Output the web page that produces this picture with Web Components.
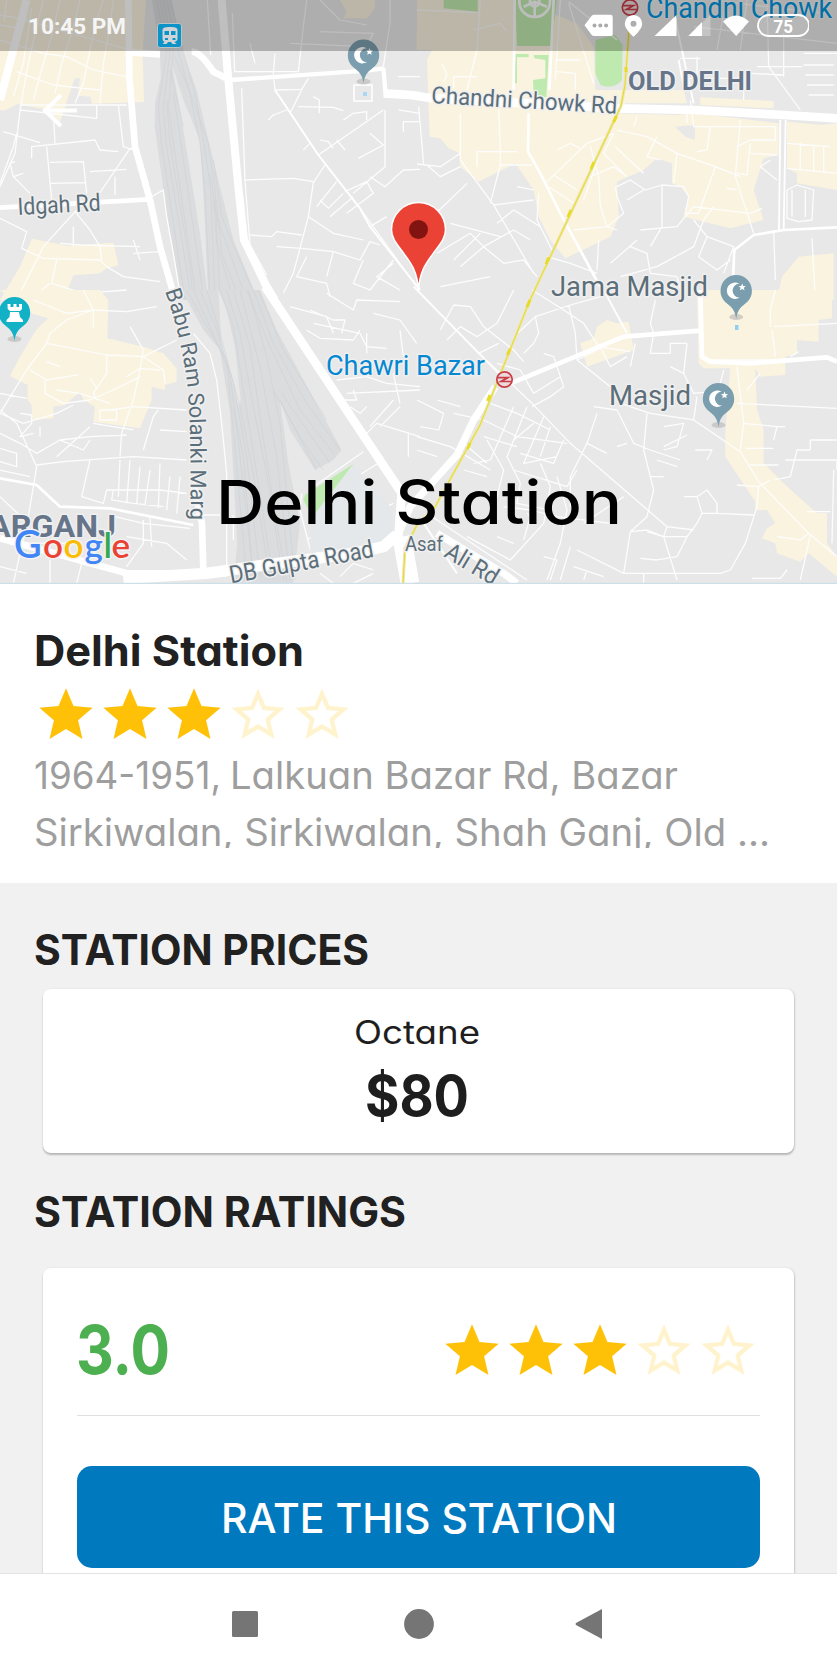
<!DOCTYPE html>
<html lang="en">
<head>
<meta charset="utf-8">
<title>Delhi Station</title>
<style>
html,body{margin:0;height:100%;overflow:hidden;background:#fff}
body{font-family:Inter,"Open Sans",sans-serif;color:#212121}
</style>
</head>
<body>
<station-screen></station-screen>
<script>
const define=(name,html)=>{
  const t=document.createElement('template');t.innerHTML=html;
  customElements.define(name,class extends HTMLElement{
    constructor(){super();this.attachShadow({mode:'open'}).append(t.content.cloneNode(true));}
  });
};

/* One line of text fitted to a given advance width. */
customElements.define('fit-text',class extends HTMLElement{
  connectedCallback(){
    const a=n=>this.getAttribute(n);
    const root=this.attachShadow({mode:'open'});
    root.innerHTML=`<style>:host{display:block;flex:none;width:${a('w')}px;height:${a('h')}px}
      svg{display:block;overflow:${this.hasAttribute('clip')?'hidden':'visible'};width:100%;height:100%}
      text{fill:currentColor;font-feature-settings:"cv11";font-weight:${a('weight')||400};font-size:${a('size')}px}</style>
      <svg><text x="${a('dx')||0}" y="${a('base')}" textLength="${+a('w')-2*(+a('dx')||0)}" lengthAdjust="spacingAndGlyphs"></text></svg>`;
    root.querySelector('text').textContent=this.textContent.trim();
  }
});

customElements.define('star-rating',class extends HTMLElement{
  connectedCallback(){
    const v=+this.getAttribute('value');
    const full='<path d="M12 17.27 18.18 21l-1.64-7.03L22 9.24l-7.19-.61L12 2 9.19 8.63 2 9.24l5.46 4.73L5.82 21z"/>';
    const empty='<path opacity=".2" d="M22 9.24l-7.19-.62L12 2 9.19 8.63 2 9.24l5.46 4.73L5.82 21 12 17.27 18.18 21l-1.63-7.03L22 9.24zM12 15.4l-3.76 2.27 1-4.28-3.32-2.88 4.38-.38L12 6.1l1.71 4.04 4.38.38-3.32 2.88 1 4.28L12 15.4z"/>';
    this.attachShadow({mode:'open'}).innerHTML='<style>:host{display:flex;flex:none}svg{width:64px;height:64px;fill:#ffc107}</style>'+
      [1,2,3,4,5].map(i=>`<svg viewBox="0 0 24 24">${i<=v?full:empty}</svg>`).join('');
  }
});

define('status-bar',`<style>
:host{display:flex;box-sizing:border-box;height:51px;padding:0 28px;justify-content:space-between;background:rgba(0,0,0,.25);color:#f5f5f5}
svg{display:block}
</style>
<svg width="105" height="51"><text x="0" y="34" font-family="Roboto" font-weight="700" font-size="22" textLength="98" lengthAdjust="spacingAndGlyphs" fill="currentColor">10:45 PM</text></svg>
<svg width="227" height="51" viewBox="582 0 227 51" fill="#fff">
 <path d="M584.5 25.3 591.5 16q1-1.3 3-1.3h16q2.2 0 2.2 2.2v17q0 2.2-2.2 2.2h-16q-2 0-3-1.4z"/>
 <g fill="#aaa"><circle cx="594.5" cy="25.6" r="2"/><circle cx="600.3" cy="25.6" r="2"/><circle cx="606.1" cy="25.6" r="2"/></g>
 <path fill-rule="evenodd" d="M633.5 15a8.7 8.7 0 0 0-8.7 8.8c0 5.7 8.7 13 8.7 13s8.7-7.3 8.7-13a8.7 8.7 0 0 0-8.7-8.8zm0 5.8a3 3 0 1 1 0 6 3 3 0 0 1 0-6z"/>
 <path d="M654.5 36 676.5 15V36z"/>
 <path opacity=".28" d="M688 36 710.5 15V36z"/><path d="M688.5 36 702 22V36z"/>
 <path d="M723 21.5Q736 9.5 749 21.5L736.2 36z"/>
 <rect x="758" y="15" width="51" height="21" rx="10.5" fill="#fff" fill-opacity=".12" stroke="#fff" stroke-width="1.8"/>
 <text x="773.5" y="32.500" font-family="Roboto" font-weight="700" font-size="19" textLength="19.5" lengthAdjust="spacingAndGlyphs">75</text>
</svg>`);

define('station-map',`<style>
:host{display:block;height:584px;overflow:hidden}
svg{display:block}
.y{fill:#faf3df}.g{fill:#bfeaaf}
.t{fill:none;stroke:#fdfdfd;stroke-width:3.8;stroke-linejoin:round}
.m{fill:none;stroke:#fff;stroke-width:8;stroke-linejoin:round}
.b{fill:none;stroke:#fff;stroke-width:20;stroke-linejoin:round}
.r{fill:none;stroke:#cfd2d5;stroke-width:3;opacity:.65}
.l{font-family:Roboto,sans-serif;fill:#5b6e79;paint-order:stroke;stroke:#f0f0f0;stroke-width:3px;stroke-linejoin:round}
</style>
<svg width="837" height="584" viewBox="0 0 837 584">
<defs>
 <g id="pin"><ellipse cx="0" cy="26" rx="7" ry="3" fill="#b5b5b5" opacity=".6"/><path d="M0 28C-1.4 18-5 16-11.5 10.5A15.7 15.7 0 1 1 11.5 10.5C5 16 1.4 18 0 28z"/></g>
 <g id="moon" fill="#fff"><path d="M3.5 6.5A8.2 8.2 0 1 1 3-7.3 6.5 6.5 0 1 0 3.5 6.5z"/><path d="m6-7.5 1 2.4 2.6.1-2 1.7.7 2.6L6-2.1 3.7-.7l.7-2.6-2-1.7 2.6-.1z"/></g>
 <g id="metro"><circle r="7.7" fill="#eddada" stroke="#c73e48" stroke-width="1.7"/><path d="M-7-1.9H3.5L-3.5 2H7" fill="none" stroke="#c73e48" stroke-width="1.7"/></g>
</defs>
<rect width="837" height="584" fill="#e8e8e8"/>
<g transform="scale(.33333)">
 <path class="y" d="M0 0H438L428 160 432 306 276 311 272 290 234 287 240 235H224L180 366 148 330 100 322 52 312 14 332 0 330zM1020 0H1125V25L1102 55H1030L1040 35zM1250 90h20v60h-20zM96 716 206 738 340 728 355 796 320 805 300 820 220 826 205 865 300 890V900H0L60 800z"/>
 <path fill="#dadcde" d="M456 0H515L548 155 590 270 630 440 665 580 700 720 775 900H545L500 640 464 380 465 310 482 235 480 155z"/>
 <path fill="#e8e8e8" d="M515 190 550 300 600 420 612 620 625 900 600 700 555 420 540 330z"/>
 <path class="r" d="M470 0 500 155 475 320 484 430 555 900M480 0 510 155 490 320 498 430 575 900M490 0 520 155 505 320 520 430 590 900M500 0 535 155 570 280 600 430 615 570 630 900M510 0 550 155 585 280 612 430 632 570 645 900M525 170 575 290 625 430 645 570 660 900M510 210 550 380M520 280 540 410 612 900M500 300 510 430 570 800 580 900M630 520 650 650 740 900M640 480 665 650 770 900M650 600 665 760 720 900M640 600 650 730 700 900"/>
 <path class="t" d="M0 45 60 55 390 150M0 75 60 85M95 25 70 190 40 290M130 0 110 80 85 190 60 330 45 460 0 560M180 0 155 110 130 190 100 300M240 0 215 100 185 190 165 280M310 0 290 60 270 150 250 250 225 310M340 0 325 110 310 190 300 310M20 0 12 65M0 120 130 160 200 170 280 210 380 230M50 215 160 255 250 265 300 270M60 315H380M60 330 290 355V315M160 340 165 430M355 315 370 440 400 450M10 395 120 428M95 475V440L285 420 300 450 355 455M270 515 380 508M140 440 155 600M150 487 250 485 260 580M150 550 255 548M345 530V585M0 550 40 440 50 400M45 485 30 490 40 530 70 520M40 530 90 580M295 585 390 445 405 445M0 655 80 695 65 745 130 775 300 780 320 800 370 830 480 845M60 880 130 740 230 630M180 730 240 735 420 740M225 635 270 690 300 740 305 780M400 720 420 780M400 760 480 755M220 680V740M170 780 155 850 250 880 380 870M150 850 90 900M455 590 490 570 500 650 520 760 540 880"/>
 <path class="t" d="M697 38 704 215H895L910 80 920 0M622 0 632 165M750 130 765 190M825 160 820 220 825 270 955 465 1080 625 1250 860M825 270 905 268 925 235M870 340 905 270M805 360 820 345 860 330M895 320 1000 322 1030 332M940 290 958 300V340M1150 330 955 465M1030 360 1060 340 1100 335V360M960 420 985 425 1000 445M1010 420 1035 450M910 450 930 430M1155 330V500L1060 580M1075 475 1150 435 1110 400M940 545 880 535 735 540 725 265M975 495 940 548 925 650 880 820 850 880M925 650 1000 700 1090 720M950 620 1010 545M960 600 985 625 1030 580M990 650 1060 590M1110 680 1160 650M1035 575 1100 545 1120 580 1040 640M1110 530 1155 560 1210 510 1260 508M750 705 815 710 830 695 905 705M830 740 905 745 1000 755 1080 780 1110 725 1140 735M920 770 890 830 980 850 990 890M1000 755 980 830M1090 780 1060 850 1110 870 1180 780M1180 790 1130 830 1200 870M1170 0V70L1150 200M960 0 1020 60 1100 75M870 130 1100 140 1120 100 960 95M1195 230H1260M1195 330 1260 340M1210 395V365H1260M740 740 830 900"/>
 <path class="t" d="M735 540 750 735 800 825"/>
 <path class="m" style="stroke-width:6" d="M825 270 955 465 1080 625 1110 680 1260 870"/>
 <path class="m" d="M690 240 1100 212 1150 205M1150 203 1157 285" style="stroke-width:13"/>
 <path class="b" d="M1155 282 1260 285M395 157 480 163M575 155Q600 155 640 215L690 240M385 0 388 230 405 440 450 600 480 740 520 880" />
 <path class="b" style="stroke-width:24" d="M665 0 685 240 715 560 732 720 800 860 825 900M80 0 0 300"/>
 <path class="m" style="stroke-width:14" d="M0 623 450 598"/>
</g>
<g transform="translate(417) scale(.33333)">
 <path class="y" d="M0 0H300L480 70 530 140 535 270H800L810 310H625L600 340 780 345 835 340 1085 370V465L1040 475 1010 570 1040 660 940 685 800 650 815 590 790 560 765 550V490L720 475 680 510 600 545 605 650 580 710 445 775 400 720 365 650 350 570 295 490 185 545 130 500 128 460 95 445 70 415 38 410 30 180 45 150 0 150zM850 292 1070 303V325L850 315zM1110 365 1215 375 1260 370V570L1140 550V520L1110 505zM1145 770 1250 760V900H1080L1095 830z"/>
 <path fill="#e8e8e8" d="M775 380 835 375 833 420 805 410z"/>
 <path class="g" d="M80 0H182V35L80 25zM295 0H420L403 138H300zM535 120 595 105 617 135 615 240Q590 270 550 255L535 220zM295 162H335V172H300V250H293zM350 165H395L388 292 350 285 348 240 385 235V180L352 175z"/>
 <g class="t" style="stroke-width:8"><circle cx="353" cy="5" r="46"/><circle cx="353" cy="5" r="14"/><path d="M320 20 353 5 390 20M353 5V50"/></g>
 <path class="t" d="M0 30 185 38M190 0 180 150 150 270M170 90 250 70 270 95M75 190 90 225 80 245M110 265V230H180M430 0 415 240M415 180H490M420 215 475 220V270M455 10 530 250M455 5 600 120M5 320 20 495M0 492 70 500 130 460M30 495 70 530 130 500M130 340V480L230 615 350 820M245 330 250 445 250 495 220 610M180 500V455H300M250 495 345 495M5 690 150 550M230 615 350 600M365 580 360 660 390 720 410 760M350 570 300 560M390 545 510 430 590 400M420 450 460 430 490 445M395 560 470 610M410 525 480 570M520 440 545 530 550 620 570 680 600 690M520 530 590 500 630 530M590 400 560 460 620 520M545 470 500 600M600 390 690 410 780 460 895 500 970 530M720 410 690 470 730 480M780 460 770 550M595 440 680 520M600 560 640 540 685 570 735 555 800 560 815 590 805 640 845 640 895 500M595 560 600 590 620 640 570 680 470 690M630 600 680 570M735 555V680L700 740M670 690 780 680 830 620 1000 640 1035 625M820 300 830 380H1075V420H1000L960 440M880 380 870 450 840 455M970 360 955 530 1010 700M1000 430 990 525 960 520M1000 460 1080 465M1080 540 1030 500 1060 480M930 565 960 570M810 340V370M650 380 660 350M890 620 860 660 830 740 720 800 610 830M830 660 870 710 950 740 920 820M870 710 845 770 900 810 940 780M640 740 690 760 700 820 780 830 800 900M660 720 580 790M545 720 540 810M1110 570 1140 555 1190 570 1185 660 1145 665 1110 655zM1125 570V650M1165 570V650M1110 430 1240 440M1110 505 1260 520M1150 430V510M1190 435V515M1220 440V515M1160 160H1260M1160 195H1250M1165 225H1250M1170 255H1250M1175 285H1250M790 175H850M800 235H980V300M840 235V170M1050 0 1055 200 1150 330M1100 100V230M830 80 1260 130M880 0 1220 40M900 150 920 40M970 150 990 0M1020 200H1155M1000 220 1100 225M1070 690 1075 840M1185 715 1195 900M60 760 160 700 200 740M100 670 250 710M110 780 190 700M240 670 290 630 370 680M200 740 290 690 340 720M130 800 200 740 260 790 320 780 360 830M70 860 220 830M390 770 460 790 540 820"/>
 <path class="m" d="M335 340 333 455 375 530 430 640 560 880M293 0 290 270M410 0 397 270M1260 682 1100 690 1010 705 952 750 948 840"/>
 <path class="m" style="stroke-width:5.500" d="M775 60 830 310M785 180 800 260M1090 360 1086 690M1106 360 1100 690"/>
 <path class="b" style="stroke-width:26" d="M-100 280-20 285 45 295 600 325 830 330 1100 345 1260 355"/>
</g>
<g transform="translate(0 290) scale(.33333)">
 <path class="y" d="M0 0H300L325 30 322 145 430 170 490 190 530 235V275L495 285V300L455 290 455 330 420 415 280 395 285 350 250 330 240 305 195 345 160 350V385L97 390 95 345 83 330V285L30 258 60 200 105 125 140 85 90 70z"/>
 <path fill="#e8e8e8" d="M90 70 145 85 105 120 70 110z"/>
 <path fill="#dadcde" d="M545 0H780L830 120 900 250 1025 480 1000 510 945 540 870 420 840 330 865 520 900 700 880 880H700L712 760 690 370 660 180 610 120z"/>
 <path fill="#e8e8e8" d="M655 0 680 60 705 170 722 330 715 350 690 250 665 170z"/>
 <path class="r" d="M560 0 610 90 680 210 700 420 740 860M580 0 630 110 690 250 720 500 760 860M600 0 650 120 700 280 740 500 780 860M620 0 660 130 720 350 760 550 810 870M660 0 700 110 730 300 770 550 820 870M680 0 720 130 760 350 800 550 850 870M700 0 750 170 780 380 830 700 860 870M720 0 780 230 830 500 870 870M745 0 800 200 840 400 885 870M740 0 810 170 900 360 1000 490M760 0 820 160 920 340 1020 480M775 0 850 180 980 390M700 350 730 500 760 870M840 330 950 540M820 300 900 440 970 540M845 310 990 520"/>
 <path class="t" d="M250 0 280 60 200 70 100 30M280 60V115M280 60 380 65 470 50M280 60 200 90 150 130 140 160 80 240 0 370M140 160 320 195 430 200 530 150M390 110 430 180 420 240 400 330 365 430 360 500M430 200 490 240 495 280M380 260 420 235 480 240M320 195 320 250 280 310 290 330M270 265 290 295M90 240 140 270 235 255M135 270V310L190 340 270 330 340 300 420 260M180 230 140 215M170 300 240 310 330 340M330 360 400 350 560 360M300 360H350V390H300zM280 400 400 420M0 310 80 325M0 370 70 400 170 370 220 345M60 370 95 375V400L60 440 100 430M120 410V440M0 430 60 460 110 490 180 450 270 440 380 435M110 525 190 515 400 500 560 510M270 410 170 500M180 450 250 480 270 450M0 475 50 490V530L0 515M0 540 90 560M0 360 50 400 110 530 85 680 40 880M430 480 460 380 475 360M480 420 560 425M270 510 245 620 310 640 320 600M320 600 480 600 560 610M340 600 335 630 400 640 490 650M360 510 355 620M390 510 380 640M420 530 410 640M450 540 435 645M480 520 475 655M510 560 500 660M540 560 530 670M345 680 430 700 570 715M450 680 455 770M380 740 500 760 560 810M430 690V760L380 830M0 620 85 700M80 760H200M150 810V880M0 830 80 850M245 820 230 880M940 100 1080 130 1100 170 1160 175M920 120 960 145 1060 150 1080 120M1100 130V190M870 50 980 80 1000 130M930 60 1000 90H1035L1025 130M980 10 1060 60 1070 30 1200 35M1120 70 1200 90 1250 160M1200 120 1210 200M1180 250 1200 340M1010 270 1100 260 1160 280 1260 290M1020 330 1070 330 1060 300M1050 350 1080 370 1100 350M1040 310 1260 300M1090 440 1130 400 1260 440M1110 410 1180 330M1140 410 1200 350M1225 430V500M940 590 1090 485M1070 560 1150 510M905 610 900 660 935 795M1120 670 1180 640M920 745H960M580 675H660M700 675V750M580 130 630 190 650 270 665 400 680 550V840"/>
 <path fill="#e4e8eb" d="M935 645 1060 525 1170 650 1190 735 1140 760 930 795z"/><path class="g" d="M1060 522 915 615 910 630 938 680z"/>
 <path class="t" d="M810 0 1240 640M1020 860 1060 820 1120 840M1060 880 1120 850M960 850 1000 880"/>
 <path class="m" d="M0 565 110 585 180 650 330 655 580 705"/>
 <path class="b" d="M0 745 380 850 680 850M580 580 606 700 610 840"/>
 <path class="b" style="stroke-width:34" d="M370 865 620 850 760 830 1060 790 1150 770 1190 735"/>
 <path class="b" style="stroke-width:26" d="M795-10 1205 610 1195 740 1240 860"/>
 <path class="b" style="stroke-width:56" d="M1205 740 1230 880"/>
</g>
<g transform="translate(417 290) scale(.33333)">
 <path class="y" d="M490 160 530 145 540 110 570 90 600 100 635 95 650 180 510 230zM840 0H1245V85L1205 90V155L1140 150V190L1105 200V255L1030 260 1015 235 1020 360 1040 420V520L1105 585 1200 670 1230 670V760L1260 800V860L1175 790 1150 815 1080 790 1075 760 1035 745 1050 715 1075 700 1050 660H1015V635L925 500V430L940 235L860 235 845 220z"/>
 <path class="t" d="M0 0 185 190 250 250 345 340 460 460 640 615 750 710 830 720M185 190 245 160M70 120 110 45 160 50 200 110 290 180 320 215M90 150 130 110 180 140 240 100 290 0M355 80 365 130 350 160 320 190M290 140 355 80 460 45 550 20M455 45 475 130 480 210 580 290M345 0 440 60 500 100 545 170 640 185M240 220 310 240 350 310 430 260 410 200 380 190M430 260 440 290 400 320 345 350M480 210 580 160M550 170 580 230 630 200M715 30 700 100 710 130 700 190 760 190V160H810M655 160 640 230M810 160 800 250 760 230M800 250 830 310 920 300M610 340 700 370 830 390 970 485 1025 575 1175 730 1260 800M830 390 840 320M690 370 680 480 710 600 690 680 640 725M530 350 600 360 650 460 700 480M540 370 510 460 460 560 460 650M600 470 630 460M510 460 570 490M740 470 810 435M740 410 800 400 780 470 740 480M700 480 790 510M720 510 780 530M835 480H885L870 510M700 560H740M870 210H1080M960 230 980 400 970 480M980 400 1080 410 1070 450M985 475H1070M1070 410H1105M990 300 1030 250M960 340 1260 355M1000 525H1085M960 585 1025 590M1065 120 1075 200M1070 110 1260 100M1075 0 1060 60V110M1120 200 1145 185M920 240 910 280 860 310M1105 510H1260V540M1180 480V450H1260M1180 480H1140L1120 560 1070 570M1250 540 1245 760M1170 665H1240M1080 740 1150 750 1175 730M1060 570 1025 590 1020 650 985 760 940 840 910 850 620 850 480 780M0 440 100 470 220 540M60 330 130 350M0 330 80 370 65 420 10 410M110 370 200 390 300 440 450 460M220 340 300 370 400 420M210 450 260 540 240 620 210 700M290 350 220 510 170 520M330 350 270 500 310 580 300 640 400 660M380 380 320 520 420 500M400 410 370 500M350 400 290 450M300 470 200 440M140 460 210 520M140 540 210 560M310 490 410 520 440 450M370 520 400 590 380 700 280 810 150 740M290 540 450 590 480 540M260 650 340 660 420 680 580 700M420 560 450 660 430 760 390 870M340 680 320 750M330 670 350 690M240 740 290 760M380 800 420 810 400 870M460 770 430 870M470 830 560 860M510 840 500 870M640 725 620 850M690 725 740 740 780 870M640 725 690 720 740 740 810 740 840 700 855 670 840 620 800 620M840 620 870 600M855 670 900 670 1010 675M870 600 900 640V670M740 740 750 710M810 740 780 800 720 810 670 805M680 850V880M1005 865H1090L1110 840M1180 735 1150 870M620 620 500 700M30 670 330 870M0 480 60 500"/>
 <path class="t" style="stroke-width:6" d="M-10-10 245 250M20 700 60 760 120 850M560 0 630 130"/>
 <path class="m" style="stroke-width:14" d="M270 285 620 140 850 122M850 0 855 200 880 215 1000 220 1230 202 1260 215"/>
 <path class="b" style="stroke-width:22" d="M235 290 170 390 120 495-20 650-60 740M60 730 260 850 300 880"/>
</g>
<path d="M629 30 625 85 621 106 530 300 480 425 435 507 417 525 405 548 403 584" fill="none" stroke="#ece7ae" stroke-width="3"/>
<path d="M629 30 625 85 621 106 530 300 480 425 435 507 417 525 405 548 403 584" fill="none" stroke="#e8da25" stroke-width="1"/>
<path d="M626 67v5M616.500 116l-3 6M594 162l-3 7M571 210l-3 7M549 257l-3 7M530 300l-3 7M510 349l-2.500 6M490 395l-2.500 6M470 443l-2.500 6" fill="none" stroke="#e8da25" stroke-width="3"/>
<rect x="363" y="92" width="4" height="4" fill="#a9d7f5"/><rect x="354" y="85" width="18" height="16" fill="none" stroke="#fff" stroke-width="1.500"/><rect x="735" y="325" width="3.500" height="5" fill="#90cef4"/>

<g fill="#7b9eae"><use href="#pin" transform="translate(363.5 55.500)"/><use href="#pin" transform="translate(736.200 291)"/><use href="#pin" transform="translate(718.500 399)"/></g>
<use href="#moon" transform="translate(363.500 55.500)"/><use href="#moon" transform="translate(736.200 291)"/><use href="#moon" transform="translate(718.500 399)"/>
<use href="#pin" transform="translate(14.500 313)" fill="#12b1c6"/>
<path fill="#fff" d="M7.500 304h3v3h3v-3h3v3h2.500v-3h3v5l-2 2H10l-2.300-2zM10 312h9l1 5 3 3v2H6.500v-2l3-3z"/>
<use href="#metro" transform="translate(630 7.500)"/><use href="#metro" transform="translate(504.500 379.500)"/>

<g class="l">
 <text x="646" y="17.500" font-size="29" textLength="186" lengthAdjust="spacingAndGlyphs" style="fill:#0095de">Chandni Chowk</text>
 <text x="628" y="89.500" font-size="25.500" font-weight="700" textLength="124" lengthAdjust="spacingAndGlyphs" style="fill:#66758a">OLD DELHI</text>
 <text transform="translate(431 103) rotate(3.300)" font-size="23.500" textLength="186" lengthAdjust="spacingAndGlyphs">Chandni Chowk Rd</text>
 <text transform="translate(18 215) rotate(-3)" font-size="24" textLength="83" lengthAdjust="spacingAndGlyphs">Idgah Rd</text>
 <text x="551" y="296" font-size="28.500" textLength="157" lengthAdjust="spacingAndGlyphs">Jama Masjid</text>
 <text x="609" y="404.500" font-size="28.500" textLength="82" lengthAdjust="spacingAndGlyphs">Masjid</text>
 <text x="326" y="374.500" font-size="28.500" textLength="159" lengthAdjust="spacingAndGlyphs" style="fill:#0588d1">Chawri Bazar</text>
 <text transform="translate(231 583.500) rotate(-10.500)" font-size="24.500" textLength="146" lengthAdjust="spacingAndGlyphs">DB Gupta Road</text>
 <path id="babu" fill="none" stroke="none" d="M165 291Q185 348 188.500 400Q191 430 190.500 535"/>
 <text font-size="22"><textPath href="#babu" textLength="232" lengthAdjust="spacingAndGlyphs">Babu Ram Solanki Marg</textPath></text>
 <text x="405" y="551" font-size="21" textLength="38" lengthAdjust="spacingAndGlyphs">Asaf</text>
 <text transform="translate(443 556) rotate(31)" font-size="24" textLength="58" lengthAdjust="spacingAndGlyphs">Ali Rd</text>
 <svg x="0" y="505" width="130" height="33"><text x="-11" y="32" font-size="32" font-weight="700" textLength="127" lengthAdjust="spacingAndGlyphs" style="fill:#66758a">ARGANJ</text></svg>
</g>
<text y="558" font-family="Lato,sans-serif" font-weight="600" font-size="35" paint-order="stroke" stroke="#f3f3f3" stroke-width="3" stroke-linejoin="round"><tspan x="14" fill="#4285f4" font-size="38">G</tspan><tspan x="43" fill="#ea4335">o</tspan><tspan x="63.500" fill="#fbbc05">o</tspan><tspan x="84.500" fill="#4285f4">g</tspan><tspan x="103.500" fill="#34a853">l</tspan><tspan x="111.500" fill="#ea4335">e</tspan></text>
<path d="M418.500 291C417.500 270 410 262 402 251C395 242 391.500 237 391.500 229.500A27 27 0 0 1 445.500 229.500C445.500 237 442 242 435 251C427 262 419.500 270 418.500 291z" fill="#ea4335" stroke="#fff" stroke-width="1.500"/><circle cx="418.500" cy="229.500" r="9.500" fill="#811411"/>
<path d="M77 110.500H44M61 95 45 110.500 61 126" fill="none" stroke="#fff" stroke-width="4.200"/>
<rect y="582.800" width="837" height="1.200" fill="#cddfe9"/>
</svg>`);

/* The train badge stays at full colour above the status bar's scrim. */
define('train-badge',`<style>:host{display:block;width:25px;height:25px}svg{display:block}</style>
<svg width="25" height="25" viewBox="156.500 23 25 25"><rect x="157" y="23.500" width="24" height="24" rx="2.500" fill="#0b93c8" stroke="#b9c2c6"/>
<path fill="#d0d4d6" fill-rule="evenodd" d="M162 30q0-3 6-3h3q6 0 6 3v9q0 2-3 3l2 2h-4l-1.500-2h-3L166 44h-4l2-2q-2-1-2-3zm2 1v4h4.500v-4zm6.500 0v4h4.500v-4zm-6 7v2h3v-2zm7.500 0v2h3v-2z"/></svg>`);

define('map-header',`<style>
:host{display:grid;height:584px;flex:none;overflow:hidden;color:#000;position:relative}
station-map,.over{grid-area:1/1}
.over{display:flex;flex-direction:column;justify-content:space-between;z-index:1}
fit-text{align-self:center}
train-badge{position:absolute;left:156.500px;top:23px;z-index:2}
</style><station-map></station-map><train-badge></train-badge><div class="over"><status-bar></status-bar><fit-text w="408" h="120" base="60" dx="1" size="60.500" weight="500">Delhi Station</fit-text></div>`);

define('paper-card',`<style>:host{display:flex;flex-direction:column;box-sizing:border-box;margin:0 43px;background:#fff;border-radius:8px;box-shadow:0 2px 2px rgba(0,0,0,.23),1px 0 2px rgba(0,0,0,.1)}</style><slot></slot>`);

define('rate-button',`<style>:host{display:flex;justify-content:center;height:102px;margin-top:50px;background:#0079bf;color:#fff;border-radius:15px}</style>
<fit-text w="398" h="90" base="67" dx="1" size="41.500" weight="550">RATE THIS STATION</fit-text>`);

define('nav-bar',`<style>:host{display:flex;box-sizing:border-box;flex:none;height:101px;border-top:1px solid #e3e3e3;background:#fff;justify-content:center;align-items:center;gap:144px}svg{width:30px;height:30px;fill:#757575;display:block}</style>
<svg viewBox="0 0 30 30"><rect x="2" y="2" width="26" height="26" rx="1.500"/></svg>
<svg viewBox="0 0 30 30"><circle cx="15" cy="15" r="14.900"/></svg>
<svg viewBox="0 0 30 30"><path d="M24 0V30L-2 16Q-3 15-2 14z" overflow="visible"/></svg><style>svg{overflow:visible}</style>`);

define('station-screen',`<style>
:host{display:flex;flex-direction:column;height:1674px;width:837px;overflow:hidden;background:#f1f1f1}
.info{box-sizing:border-box;flex:none;height:299px;padding:40px 34px 0;background:#fff}
.addr{color:#9e9e9e}
.line{display:flex;gap:9px}
main{flex:1;min-height:0;overflow:hidden;padding-top:40px}
h2{margin:0 0 0 34px;font:inherit}
.price{height:164px;padding:21px 3px 0 0;align-items:center;margin-top:8px;color:#1e1e1e}
.ratings{height:400px;padding:0 34px;margin-top:26px}
.row{display:flex;justify-content:space-between;align-items:center;height:147px;border-bottom:1px solid #e0e0e0}
star-rating{align-self:flex-start}
.row star-rating{margin-top:51px}
.row fit-text{color:#4caf50;margin-left:-1px}
.second{margin-top:31px}
</style>
<map-header></map-header>
<section class="info">
<fit-text w="270" h="59" base="42" size="42.500" weight="650">Delhi Station</fit-text>
<star-rating value="3"></star-rating>
<div class="line addr"><fit-text w="187" h="57" base="42" size="37.800">1964-1951,</fit-text><fit-text w="448" h="57" base="42" size="37.800">Lalkuan Bazar Rd, Bazar</fit-text></div>
<fit-text clip class="addr" w="736" h="44" base="42" size="37.800">Sirkiwalan, Sirkiwalan, Shah Ganj, Old ...</fit-text>
</section>
<main>
<h2><fit-text w="335" h="58" base="42" size="42.500" weight="650">STATION PRICES</fit-text></h2>
<paper-card class="price"><fit-text w="126" h="48" base="34" size="32">Octane</fit-text><fit-text w="104" h="80" base="58" size="56" weight="650">$80</fit-text></paper-card>
<h2 class="second"><fit-text w="372" h="58" base="42.500" size="42.500" weight="650">STATION RATINGS</fit-text></h2>
<paper-card class="ratings"><div class="row"><fit-text w="94" h="100" base="82" size="67" weight="680">3.0</fit-text><star-rating value="3"></star-rating></div><rate-button></rate-button></paper-card>
</main>
<nav-bar></nav-bar>`);
</script>
</body>
</html>
